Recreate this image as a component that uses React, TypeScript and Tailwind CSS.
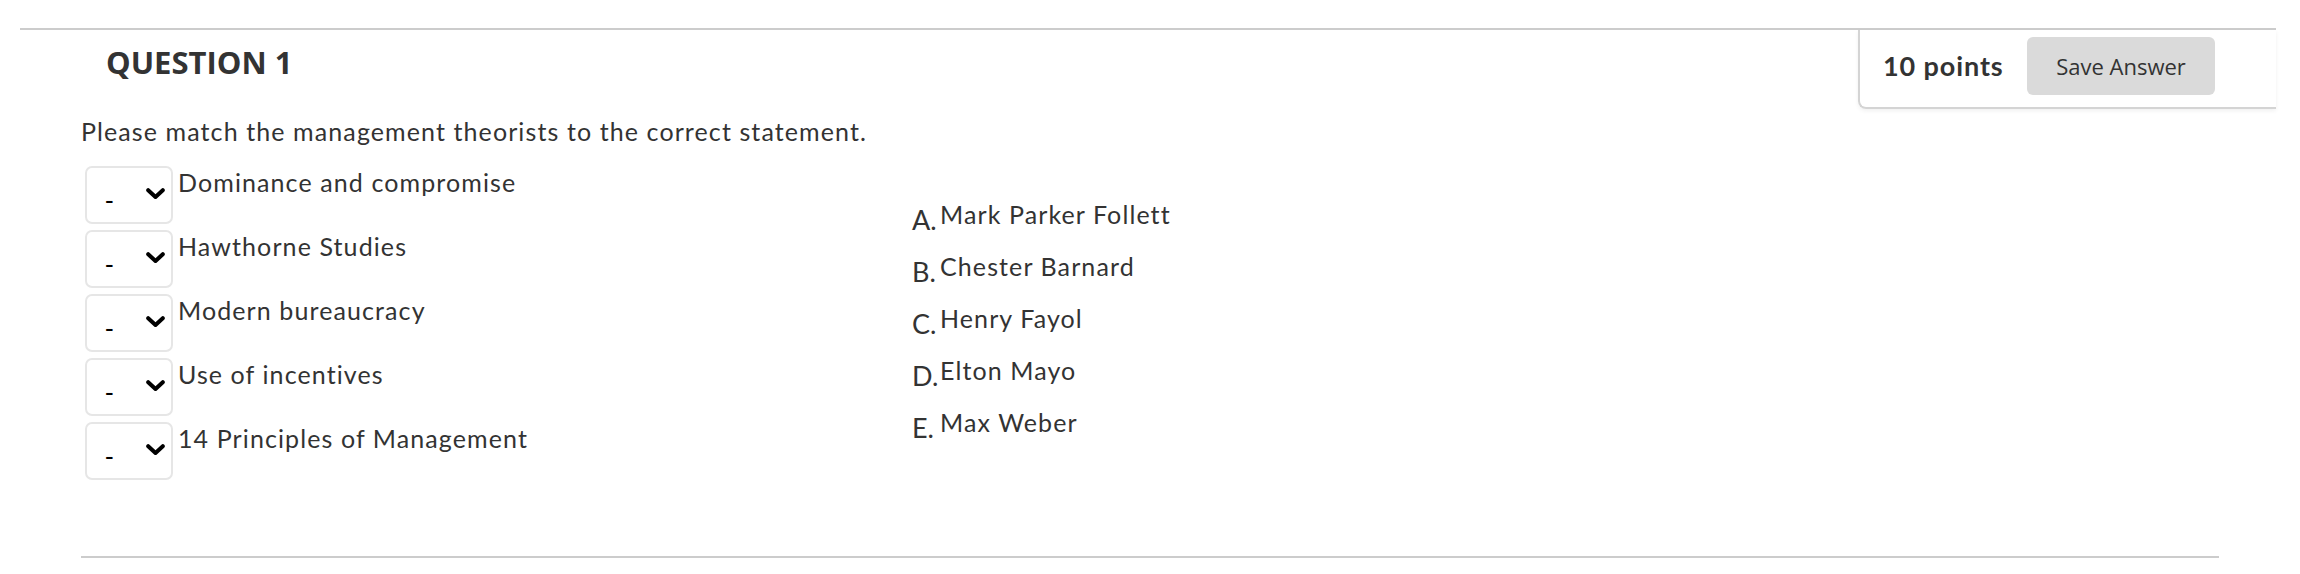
import React from 'react'

const prompts = [
    'Dominance and compromise',
    'Hawthorne Studies',
    'Modern bureaucracy',
    'Use of incentives',
    '14 Principles of Management',
]

const answers = [
    { letter: 'A.', name: 'Mark Parker Follett' },
    { letter: 'B.', name: 'Chester Barnard' },
    { letter: 'C.', name: 'Henry Fayol' },
    { letter: 'D.', name: 'Elton Mayo' },
    { letter: 'E.', name: 'Max Weber' },
]

function MatchSelect() {
    return (
        <div className="w-[88px] h-[58px] shrink-0 border-2 border-[#e6e6e6] rounded-[7px] bg-white flex items-start pl-[18px] pr-[6px] pt-[20px]">
            <span className="text-[26px] leading-[22px] text-black font-['Liberation_Sans',sans-serif] mt-[1px]">-</span>
            <svg className="ml-auto" width="19" height="12" viewBox="0 0 19 12" fill="none">
                <polyline points="2.2,2.2 9.5,9 16.8,2.2" stroke="#000" strokeWidth="4" strokeLinecap="round" strokeLinejoin="round" />
            </svg>
        </div>
    )
}

export default function App() {
    return (
        <div className="w-[2300px] h-[574px] bg-white pt-[28px] text-[#333333] font-['Lato',sans-serif]">
            {/* header */}
            <div className="ml-[20px] mr-[24px] border-t-2 border-[#cccccc] flex justify-between">
                <h2 className="pl-[86px] pt-[17px] text-[31px] leading-[31px] font-bold font-['Open_Sans',sans-serif] text-[#333333]">
                    QUESTION 1
                </h2>
                <div className="w-[418px] h-[79px] border-l-2 border-b-2 border-[#d4d4d4] rounded-bl-[8px] shadow-[0_2px_4px_rgba(0,0,0,0.06)] flex items-center justify-between pl-[23px] pr-[61px] pb-[5px]">
                    <span className="text-[27px] tracking-[0.9px] font-bold text-[#333333]">10 points</span>
                    <button className="w-[188px] h-[58px] bg-[#dadada] rounded-[6px] text-[22px] font-['Open_Sans',sans-serif] text-[#333333]">
                        Save Answer
                    </button>
                </div>
            </div>

            {/* question body */}
            <div className="mx-[81px] mt-[6px] text-[25px] tracking-[1.1px]">
                <p className="leading-[32px]">Please match the management theorists to the correct statement.</p>
                <div className="mt-[19px] flex items-center">
                    <div className="w-[831px] pl-[4px] flex flex-col gap-[6px]">
                        {prompts.map((p) => (
                            <div key={p} className="flex items-start gap-[5px]">
                                <MatchSelect />
                                <span className="leading-[32px]">{p}</span>
                            </div>
                        ))}
                    </div>
                    <div className="pt-[10px] flex flex-col">
                        {answers.map((a) => (
                            <div key={a.letter} className="h-[52px] flex items-start">
                                <span className="w-[28px] text-[27px] tracking-normal leading-[32px] mt-[6px]">{a.letter}</span>
                                <span className="leading-[32px]">{a.name}</span>
                            </div>
                        ))}
                    </div>
                </div>
            </div>

            <div className="mx-[81px] mt-[76px] border-t-2 border-[#cccccc]" />
        </div>
    )
}
